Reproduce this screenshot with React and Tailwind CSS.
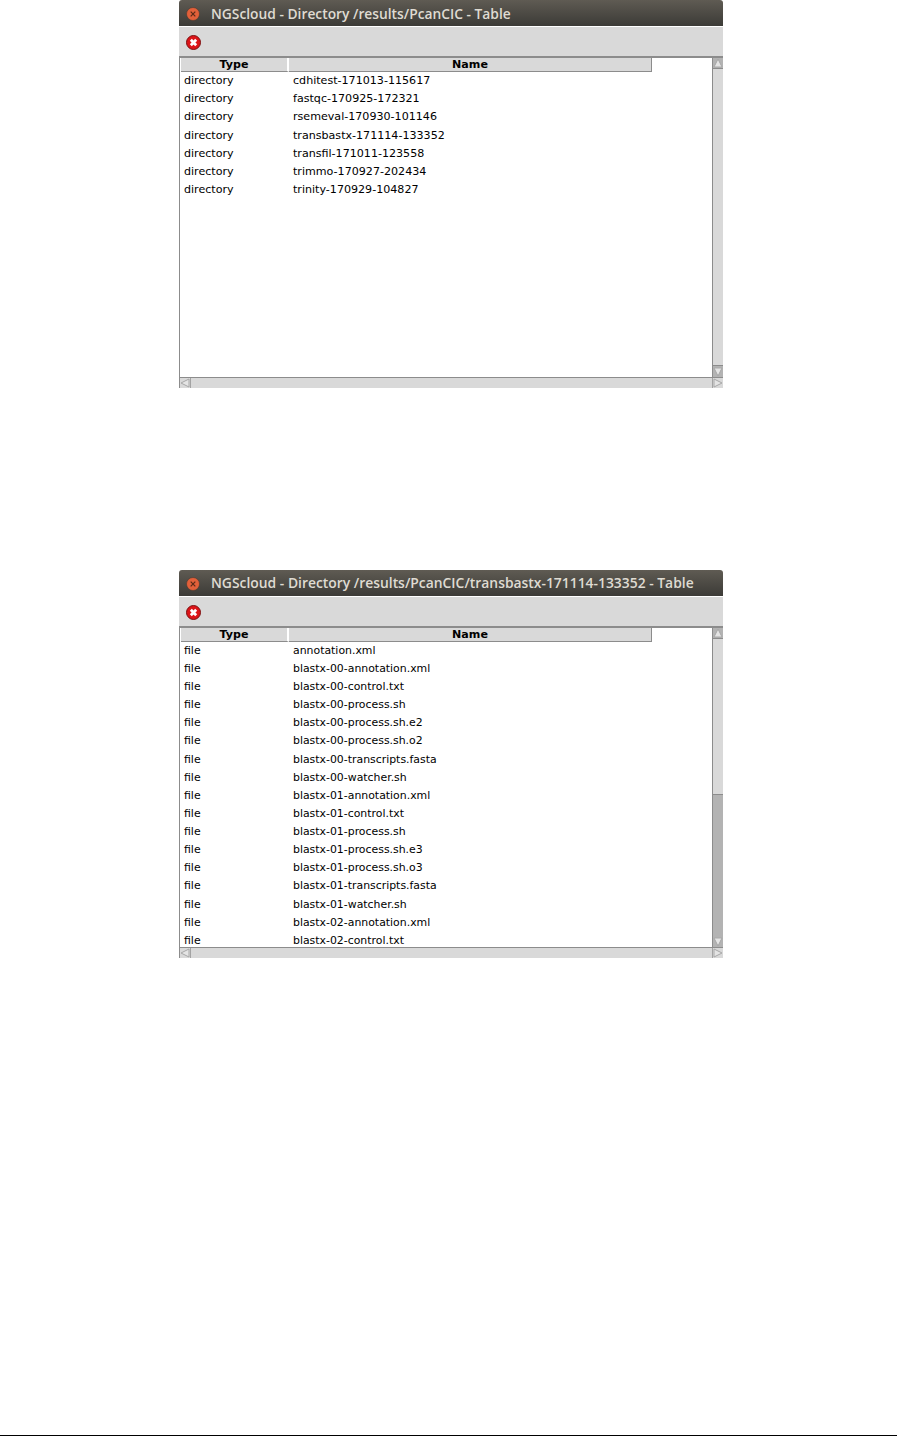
import React from "react";

const firstRows = [
  ["directory", "cdhitest-171013-115617"],
  ["directory", "fastqc-170925-172321"],
  ["directory", "rsemeval-170930-101146"],
  ["directory", "transbastx-171114-133352"],
  ["directory", "transfil-171011-123558"],
  ["directory", "trimmo-170927-202434"],
  ["directory", "trinity-170929-104827"],
];

const secondRows = [
  "annotation.xml",
  "blastx-00-annotation.xml",
  "blastx-00-control.txt",
  "blastx-00-process.sh",
  "blastx-00-process.sh.e2",
  "blastx-00-process.sh.o2",
  "blastx-00-transcripts.fasta",
  "blastx-00-watcher.sh",
  "blastx-01-annotation.xml",
  "blastx-01-control.txt",
  "blastx-01-process.sh",
  "blastx-01-process.sh.e3",
  "blastx-01-process.sh.o3",
  "blastx-01-transcripts.fasta",
  "blastx-01-watcher.sh",
  "blastx-02-annotation.xml",
  "blastx-02-control.txt",
].map((name) => ["file", name]);

const Arrow = ({ points }) => (
  <svg width="10" height="10" viewBox="0 0 10 10" className="block shrink-0">
    <polygon points={points} fill="#e4e4e4" stroke="#a8a8a8" strokeWidth="1" />
  </svg>
);

const TitleClose = () => (
  <svg width="14" height="14" viewBox="0 0 14 14" className="block shrink-0">
    <circle cx="7" cy="7" r="6.5" fill="#e2603a" stroke="#4a3a30" strokeWidth="0.6" />
    <path d="M4.7 4.7l4.6 4.6M9.3 4.7l-4.6 4.6" stroke="#5a2a18" strokeWidth="1.2" />
  </svg>
);

const ToolbarClose = () => (
  <svg width="15" height="15" viewBox="0 0 15 15" className="block shrink-0">
    <circle cx="7.5" cy="7.5" r="7" fill="#dc1418" stroke="#7c1010" strokeWidth="1" />
    <path d="M4.8 4.8l5.4 5.4M10.2 4.8l-5.4 5.4" stroke="#ffffff" strokeWidth="2.8" />
  </svg>
);

const Window = ({ title, rows, thumb, className, titleSize, rowSize }) => (
  <div className={`ml-[179px] flex h-[388px] w-[544px] flex-col ${className}`}>
    {/* Title bar */}
    <div className="flex h-[26px] shrink-0 items-center rounded-t-[3px] bg-gradient-to-b from-[#5f5b53] to-[#3c3b37] pt-[2px] pl-[7px]">
      <TitleClose />
      <span
        className={`ml-[11px] whitespace-nowrap font-['Open_Sans',sans-serif] font-semibold text-[#dfdbd2] ${titleSize}`}
      >
        {title}
      </span>
    </div>

    {/* Toolbar */}
    <div className="flex h-[30px] shrink-0 items-center border-t border-white bg-[#d9d9d9] pt-[2px] pl-[7px]">
      <ToolbarClose />
    </div>

    {/* Table + scrollbars */}
    <div className="flex min-h-0 flex-1 flex-col border-t-2 border-l border-[#8c8c8c] bg-white">
      <div className="flex min-h-0 flex-1">
        <div className="min-w-0 flex-1 overflow-hidden pl-px font-['DejaVu_Sans',sans-serif] text-black">
          <div className="flex h-[14px] text-[11.1px] font-bold leading-[13px]">
            <div className="w-[108px] border-r-2 border-b border-r-white border-b-[#8c8c8c] bg-[#d9d9d9] text-center">
              Type
            </div>
            <div className="w-[363px] border-r border-b border-[#8c8c8c] bg-[#d9d9d9] text-center">
              Name
            </div>
          </div>
          <div className={`pt-[0.4px] ${rowSize}`}>
            {rows.map(([type, name]) => (
              <div key={name} className="flex h-[18.14px] items-center whitespace-nowrap">
                <span className="w-[112px] pl-[3px]">{type}</span>
                <span>{name}</span>
              </div>
            ))}
          </div>
        </div>

        {/* Vertical scrollbar */}
        <div className="flex w-[11px] shrink-0 flex-col border-l border-[#8c8c8c] bg-[#b3b3b3]">
          <Arrow points="5,1 9,9 1,9" />
          <div
            className="shrink-0 border-y border-[#8c8c8c] bg-[#d9d9d9]"
            style={{ height: thumb }}
          />
          <div className="flex-1" />
          <Arrow points="1,1 9,1 5,9" />
        </div>
      </div>

      {/* Horizontal scrollbar */}
      <div className="flex h-[11px] shrink-0 items-center justify-between border-t border-[#8c8c8c] bg-[#d9d9d9]">
        <Arrow points="9,1 9,9 1,5" />
        <div className="h-full flex-1 border-x border-[#a3a3a3]" />
        <Arrow points="1,1 9,5 1,9" />
      </div>
    </div>
  </div>
);

export default function App() {
  return (
    <div className="flex h-[1436px] flex-col bg-white">
      <Window
        title="NGScloud - Directory /results/PcanCIC - Table"
        rows={firstRows}
        thumb={298}
        titleSize="text-[13.8px]"
        rowSize="text-[11.1px]"
      />
      <Window
        title="NGScloud - Directory /results/PcanCIC/transbastx-171114-133352 - Table"
        rows={secondRows}
        thumb={157}
        className="mt-[181.5px]"
        titleSize="text-[13.88px]"
        rowSize="text-[10.9px]"
      />
      <div className="mt-auto h-px bg-black" />
    </div>
  );
}
